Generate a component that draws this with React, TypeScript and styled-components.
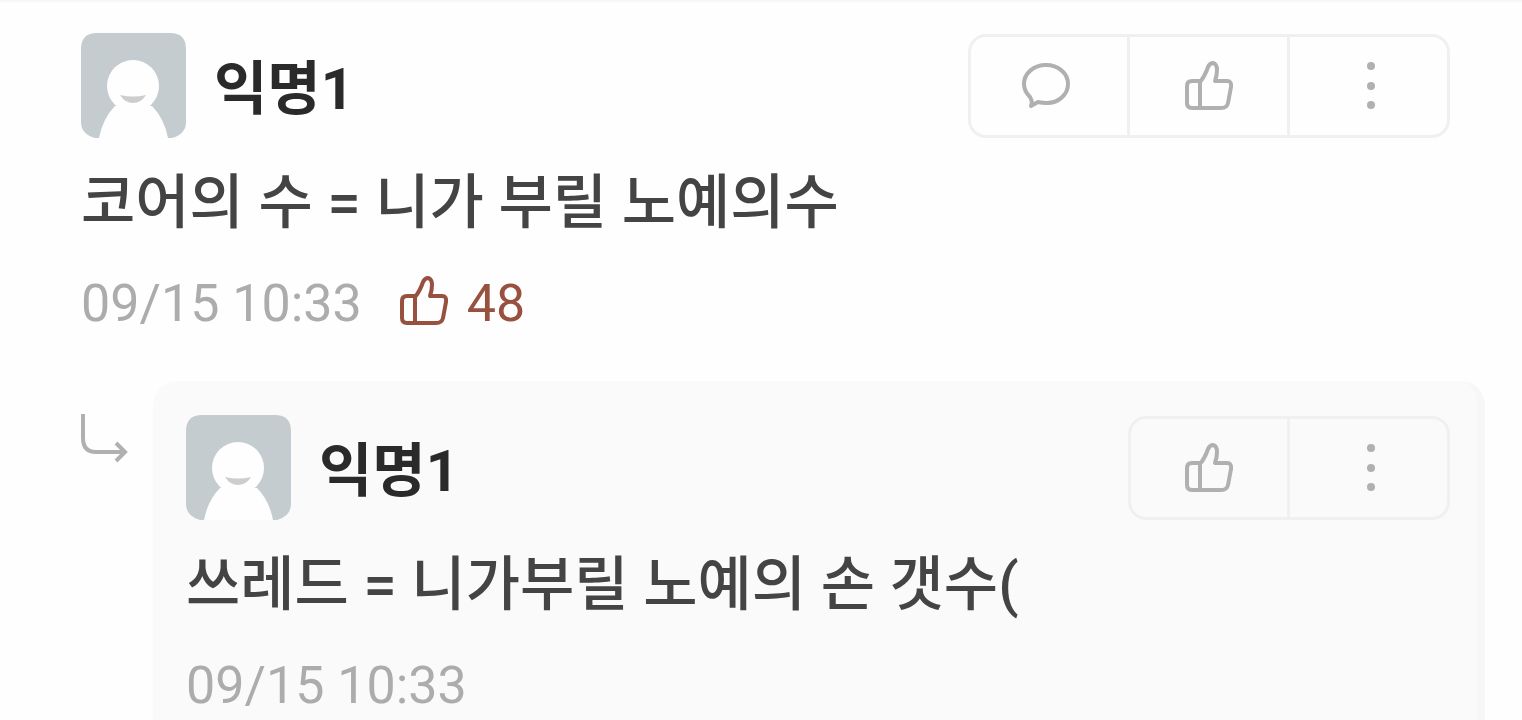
import React from 'react';
import styled, { createGlobalStyle } from 'styled-components';

const GlobalStyle = createGlobalStyle`
  * { box-sizing: border-box; }
  body {
    margin: 0;
    background: #fefefe;
    color: #333;
    font-family: Roboto, "Noto Sans CJK KR", sans-serif;
  }
`;

const Page = styled.main`
  min-height: 100vh;
  border-top: 2px solid #f7f7f7;
  display: flex;
  flex-direction: column;
`;

const Comment = styled.article`
  padding: 31px 72px 0 81px;
`;

const ReplyRow = styled.div`
  flex: 1;
  display: flex;
  margin-top: 45px;
  padding: 0 37px 0 79px;
`;

const ReplyMark = styled.svg`
  flex: none;
  width: 50px;
  height: 52px;
  margin: 32px 24px 0 0;
`;

const Reply = styled.article`
  flex: 1;
  min-width: 0;
  padding: 34px 27px 0 33px;
  border-right: 8px solid #f7f7f7;
  border-radius: 24px 24px 0 0;
  background: #fafafa;
`;

const Header = styled.header`
  display: flex;
  align-items: center;
  height: 105px;
`;

const AvatarArt = styled.svg`
  flex: none;
  width: 105px;
  height: 105px;
`;

const Name = styled.h2`
  flex: 1;
  margin: 0 0 0 28px;
  padding-top: 6px;
  font-size: 58px;
  line-height: 80px;
  font-weight: 700;
  color: #2a2a2a;
`;

const Actions = styled.div`
  display: flex;
  height: 104px;
  border: 3px solid #f0f0f0;
  border-radius: 18px;
`;

const ActionButton = styled.button`
  display: flex;
  align-items: center;
  justify-content: center;
  width: 156px;
  padding: 0;
  border: 0;
  background: transparent;
  color: #b0b0b0;
  cursor: pointer;

  & + & {
    width: 160px;
    border-left: 3px solid #f0f0f0;
  }
`;

const Icon = styled.svg`
  width: 50px;
  height: 50px;
  overflow: visible;
  fill: none;
  stroke: currentColor;
  stroke-width: 4px;
  stroke-linecap: round;
  stroke-linejoin: round;
`;

const Body = styled.p`
  margin: 25px 0 0;
  font-size: 59px;
  line-height: 80px;
  font-weight: 500;
  color: #444;
`;

const Meta = styled.div`
  display: flex;
  align-items: center;
  margin-top: 29px;
  font-size: 52px;
  line-height: 64px;
  color: #acacac;
`;

const Likes = styled.span`
  display: flex;
  align-items: center;
  gap: 18px;
  margin-left: 37px;
  color: #98503f;

  ${Icon} {
    margin-bottom: 6px;
  }
`;

const Avatar = () => (
  <AvatarArt viewBox="0 0 105 105" aria-hidden="true">
    <path d="M16 0H89Q105 0 105 16V89Q105 101 91 105H14Q0 101 0 89V16Q0 0 16 0Z" fill="#c5ccd0" />
    <path d="M18 105Q22 85 34 73H71Q83 85 87 105Z" fill="#fefefe" />
    <circle cx="52" cy="53" r="26" fill="#fefefe" />
    <path d="M39 62Q52 65 65 62Q60 70 52 70Q44 70 39 62Z" fill="#cdcdcb" />
  </AvatarArt>
);

const BubbleIcon = () => (
  <Icon viewBox="0 0 50 50" aria-hidden="true">
    <path d="M6 36C2 32 0 28 0 23C0 12 10 4 22 4S44 12 44 23S34 42 23 42Q18 42 14 41L7 45Q9 41 6 36Z" />
  </Icon>
);

const ThumbIcon = () => (
  <Icon viewBox="0 0 50 50" aria-hidden="true">
    <path d="M16 20H8Q3 20 3 25V42Q3 47 8 47H16Z" />
    <path d="M16 21Q21 15 24 6Q26 2 29 2Q33 3 33 9Q33 14 31 20H43Q48 20 47 26L44 42Q43 47 37 47H16" />
  </Icon>
);

const DotsIcon = () => (
  <Icon viewBox="0 0 50 50" aria-hidden="true">
    {[5, 25, 44].map((y) => (
      <circle key={y} cx="27" cy={y} r="4" fill="currentColor" stroke="none" />
    ))}
  </Icon>
);

interface ContentProps {
  name: string;
  text: string;
  time: string;
  likes?: number;
  canReply?: boolean;
}

const Content = ({ name, text, time, likes, canReply }: ContentProps) => (
  <>
    <Header>
      <Avatar />
      <Name>{name}</Name>
      <Actions>
        {canReply && (
          <ActionButton type="button" aria-label="댓글">
            <BubbleIcon />
          </ActionButton>
        )}
        <ActionButton type="button" aria-label="공감">
          <ThumbIcon />
        </ActionButton>
        <ActionButton type="button" aria-label="더보기">
          <DotsIcon />
        </ActionButton>
      </Actions>
    </Header>
    <Body>{text}</Body>
    <Meta>
      <time>{time}</time>
      {likes !== undefined && (
        <Likes>
          <ThumbIcon />
          {likes}
        </Likes>
      )}
    </Meta>
  </>
);

export default function App() {
  return (
    <>
      <GlobalStyle />
      <Page>
        <Comment>
          <Content name="익명1" text="코어의 수 = 니가 부릴 노예의수" time="09/15 10:33" likes={48} canReply />
        </Comment>
        <ReplyRow>
          <ReplyMark viewBox="0 0 50 52" fill="none" stroke="#b0b0b0" strokeWidth="4" aria-hidden="true">
            <path d="M4 1V25Q4 39 17 39H46M37 30L46 39L37 48" />
          </ReplyMark>
          <Reply>
            <Content name="익명1" text="쓰레드 = 니가부릴 노예의 손 갯수(" time="09/15 10:33" />
          </Reply>
        </ReplyRow>
      </Page>
    </>
  );
}
